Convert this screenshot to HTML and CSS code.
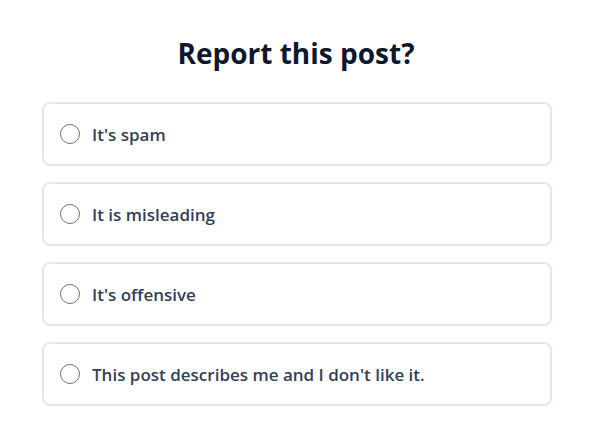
FILE: index.html
```html
<!DOCTYPE html>
<html>
<head>
<meta charset="utf-8">
<link rel="stylesheet" href="styles.css">
</head>
<body>
<div class="dialog">
  <h1 class="title">Report this post?</h1>
  <div class="options">
    <label class="option"><span class="radio"></span><span class="label">It's spam</span></label>
    <label class="option"><span class="radio"></span><span class="label">It is misleading</span></label>
    <label class="option"><span class="radio"></span><span class="label">It's offensive</span></label>
    <label class="option"><span class="radio"></span><span class="label">This post describes me and I don't like it.</span></label>
  </div>
</div>
</body>
</html>
```
FILE: styles.css
```css
html, body {
  margin: 0;
  padding: 0;
  background: #ffffff;
}
body {
  font-family: "Open Sans", "Noto Sans", sans-serif;
}
.dialog {
  width: 510px;
  margin: 0 auto;
  padding: 33px 0 0 4px;
}
.title {
  margin: 0 0 29px -2px;
  text-align: center;
  font-size: 28px;
  font-weight: 700;
  line-height: 40px;
  color: #0f172a;
}
.options {
  display: flex;
  flex-direction: column;
  gap: 16px;
}
.option {
  display: flex;
  align-items: center;
  height: 60px;
  padding: 0 16px;
  border: 2px solid #e2e8f0;
  border-radius: 8px;
  gap: 12px;
}
.radio {
  width: 18px;
  height: 18px;
  border: 1px solid #6b7280;
  border-radius: 50%;
  flex: none;
}
.label {
  font-size: 17px;
  font-weight: 600;
  color: #334155;
}
```
